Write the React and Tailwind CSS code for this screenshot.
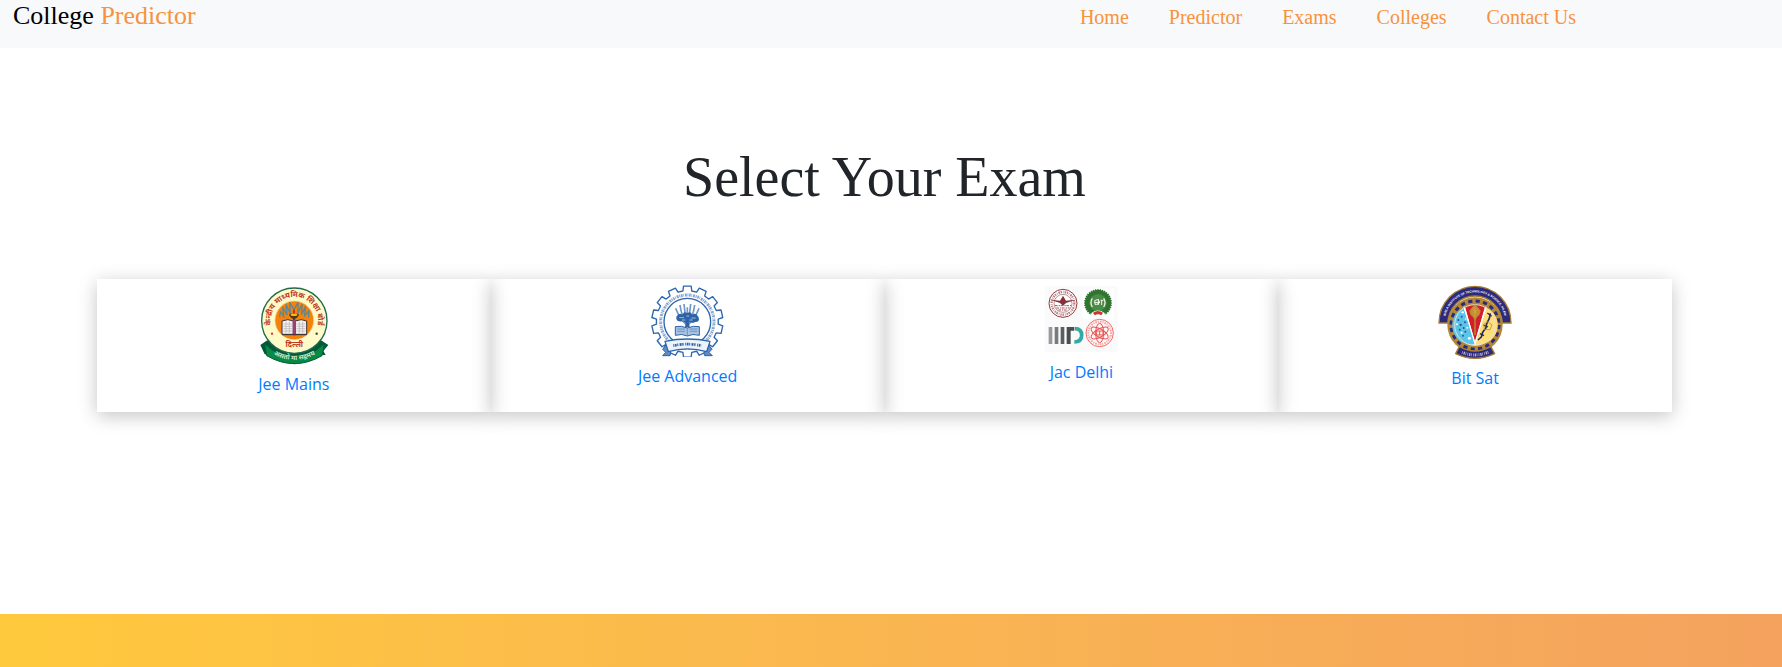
import React from "react";

const NAV_LINKS = ["Home", "Predictor", "Exams", "Colleges", "Contact Us"];

const polar = (cx, cy, r, deg) => {
  const a = ((deg - 90) * Math.PI) / 180;
  return [(cx + r * Math.cos(a)).toFixed(1), (cy + r * Math.sin(a)).toFixed(1)].join(" ");
};

const gearPath = (cx, cy, outer, base, teeth) => {
  const step = 360 / teeth;
  let d = "";
  for (let i = 0; i < teeth; i += 1) {
    const a = i * step;
    const points = [
      [base, a - step * 0.32],
      [outer, a - step * 0.24],
      [outer, a + step * 0.24],
      [base, a + step * 0.32],
    ];
    points.forEach(([r, deg], k) => {
      d += `${i === 0 && k === 0 ? "M" : "L"}${polar(cx, cy, r, deg)}`;
    });
  }
  return `${d}Z`;
};

function CbseLogo() {
  return (
    <svg viewBox="29 30 210 240" className="h-[80px] w-[70px]" role="img" aria-label="Jee Mains logo">
      <path d="M33 210L54 196L215 196L237 210L222 228L229 240L200 240L135 268L68 240L46 238Z" fill="#00593a" />
      <circle cx="135" cy="137" r="98" fill="#fffbc9" stroke="#1d6b4c" strokeWidth="4" />
      <path d="M46 206Q135 290 225 206L218 242Q135 290 52 242Z" fill="#068a47" stroke="#0a5a38" strokeWidth="3" />
      <circle cx="135" cy="136" r="58" fill="#f5820b" stroke="#ead9a0" strokeWidth="2" />
      <path
        d="M91 126L93 110L103 124L100 96L113 120L110 88L123 116L121 82L134 104L146 82L146 114L158 88L157 118L169 94L166 122L178 108L178 126"
        fill="none"
        stroke="#5e8793"
        strokeWidth="4"
      />
      <path d="M119 118Q134 110 149 118Q146 130 134 132Q122 130 119 118ZM131 130H137V137H131Z" fill="#4c3a20" />
      <ellipse cx="134" cy="119" rx="10" ry="4" fill="#e8c21a" />
      <path d="M134 102Q141 111 134 118Q127 111 134 102Z" fill="#e1261c" />
      <path d="M98 138Q116 130 132 138V178H98ZM138 138Q156 130 172 138V178H138Z" fill="#f3f0ee" stroke="#3d3136" strokeWidth="3" />
      <path d="M102 147H129M102 154H129M102 161H129M102 168H129M141 147H168M141 154H168M141 161H168M141 168H168M110 140V174M120 140V174M150 140V174M160 140V174" stroke="#a8a3a4" strokeWidth="1.5" />
      <path d="M130 134H140V181H130Z" fill="#9c3f78" />
      <path d="M98 179H172" stroke="#3d3136" strokeWidth="3" />
      <circle cx="68" cy="176" r="3.5" fill="#e5392c" />
      <circle cx="202" cy="176" r="3.5" fill="#2f3e2b" />
      <path id="cbse-ring" d="M66 154A71 71 0 1 1 204 154" fill="none" />
      <text fontSize="23" fontWeight="700" fill="#c0391f" className="font-['Noto_Sans',sans-serif]">
        <textPath href="#cbse-ring" startOffset="50%" textAnchor="middle">केन्द्रीय माध्यमिक शिक्षा बोर्ड</textPath>
      </text>
      <text x="135" y="217" fontSize="22" fontWeight="700" textAnchor="middle" fill="#c0391f" className="font-['Noto_Sans',sans-serif]">दिल्ली</text>
      <path id="cbse-ribbon" d="M52 226Q135 284 218 226" fill="none" />
      <text fontSize="20" fontWeight="700" fill="#c9e8c8" className="font-['Noto_Sans',sans-serif]">
        <textPath href="#cbse-ribbon" startOffset="50%" textAnchor="middle">असतो मा सद्गमय</textPath>
      </text>
    </svg>
  );
}

function IitLogo() {
  return (
    <svg viewBox="60 31 228 216" className="h-[72px] w-[76px]" role="img" aria-label="Jee Advanced logo">
      <path d={gearPath(172, 141, 107, 93, 14)} fill="#fff" stroke="#2c66ae" strokeWidth="4" strokeLinejoin="round" />
      <circle cx="172" cy="141" r="80" fill="none" stroke="#5f86bb" strokeWidth="9" strokeDasharray="3 2 5 2 2 3 6 2" opacity=".75" />
      <circle cx="172" cy="141" r="70" fill="#fff" stroke="#2c66ae" strokeWidth="4" />
      <path
        d="M172 156V98M172 152Q150 136 137 101M172 148Q155 128 150 91M172 148Q164 120 162 88M172 148Q180 120 182 88M172 148Q189 128 194 91M172 152Q194 136 207 101"
        fill="none"
        stroke="#6f96c8"
        strokeWidth="5"
      />
      <path d="M139 126Q148 112 157 120Q163 108 172 116Q181 108 187 120Q197 112 205 126Q212 141 196 142Q184 148 176 140Q168 148 160 140Q137 144 139 126Z" fill="#2c62a8" />
      <path d="M148 129H162M169 124H178M184 130H197M156 136H166M178 136H188" stroke="#b4cbe5" strokeWidth="2.5" />
      <path d="M168 138H176L179 158H165Z" fill="#2c62a8" />
      <path d="M136 156Q154 152 172 160Q190 152 208 156V182Q188 176 172 184Q156 176 136 182Z" fill="#a9c3e2" stroke="#2c62a8" strokeWidth="3" />
      <path d="M172 160V184M142 163H165M142 170H165M179 163H202M179 170H202" stroke="#4d7bb6" strokeWidth="2" />
      <path d="M98 224L115 200L122 236L120 243L98 243L107 233ZM246 224L229 200L222 236L224 243L247 243L237 233Z" fill="#5f8cc4" stroke="#2c62a8" strokeWidth="3" />
      <path d="M105 200Q172 186 240 200L230 231Q172 214 115 231Z" fill="#edf3fa" stroke="#2c66ae" strokeWidth="4" strokeLinejoin="round" />
      <path d="M130 213Q172 204 214 213" fill="none" stroke="#2c62a8" strokeWidth="8" strokeDasharray="3 2 5 2 3 4 6 2 4 5" />
    </svg>
  );
}

function JacLogo() {
  return (
    <svg viewBox="43 30 222 204" className="h-[68px] w-[74px]" role="img" aria-label="Jac Delhi logo">
      <path d="M45 34H264V231H45Z" fill="#fafafa" />
      <path d="M158 42H252V131H158Z" fill="#fff" />
      <circle cx="100" cy="85" r="42" fill="#fff" stroke="#8d3b41" strokeWidth="3" />
      <circle cx="100" cy="85" r="34" fill="none" stroke="#b98388" strokeWidth="7" strokeDasharray="4 3 2 3 5 2" />
      <circle cx="100" cy="85" r="27" fill="#fff" stroke="#a2555a" strokeWidth="2" />
      <path d="M62 74L91 77L100 62L109 77L138 74L109 84L100 92L91 84Z" fill="#84313a" />
      <path d="M76 92H124M80 99H120M86 105H114" stroke="#9c565b" strokeWidth="3" strokeDasharray="8 3 4 2" />
      <path d={gearPath(205, 84, 42, 39, 36)} fill="#2f7530" />
      <circle cx="205" cy="83" r="26" fill="#4d8a45" />
      <path d="M188 70Q180 83 188 96M222 70Q230 83 222 96" fill="none" stroke="#e6f0e2" strokeWidth="4" />
      <path d="M195 77Q204 70 210 79Q206 91 196 88ZM195 83H211M213 76H221M216 76V90M206 72V90" fill="none" stroke="#f3f8ef" strokeWidth="3" />
      <path d="M186 113Q205 100 224 113L230 128H180Z" fill="#fff" />
      <path d="M190 113Q205 103 220 113L215 121Q205 115 195 121Z" fill="#c43a2f" />
      <path d="M57 156H68V207H57Z" fill="#95989d" />
      <path d="M75 156H86V207H75Z" fill="#777a7f" />
      <path d="M93 156H104V207H93Z" fill="#5b5d62" />
      <path d="M111 156H134V167H123V207H111Z" fill="#4b4d53" />
      <path d="M136 161Q156 161 156 181Q156 201 134 201" fill="none" stroke="#32aaa6" strokeWidth="11" />
      <circle cx="210" cy="174" r="41" fill="#fff7f7" stroke="#ee6c6c" strokeWidth="3" />
      <circle cx="210" cy="174" r="34" fill="none" stroke="#f5a3a3" strokeWidth="6" strokeDasharray="3 3 5 3" />
      <g fill="none" stroke="#ea5050" strokeWidth="3">
        <ellipse cx="210" cy="174" rx="12" ry="29" />
        <ellipse cx="210" cy="174" rx="12" ry="29" transform="rotate(60 210 174)" />
        <ellipse cx="210" cy="174" rx="12" ry="29" transform="rotate(120 210 174)" />
        <path d="M200 168H220V180H200ZM210 168V180" />
      </g>
    </svg>
  );
}

function BitsLogo() {
  return (
    <svg viewBox="40 32 222 222" className="h-[74px] w-[74px]" role="img" aria-label="Bit Sat logo">
      <path d="M43 146A108 110 0 0 1 259 146L232 146A81 81 0 0 0 70 146Z" fill="#2c2a7c" stroke="#a67c35" strokeWidth="4" />
      <circle cx="151" cy="152" r="83" fill="#b38938" />
      <circle cx="151" cy="152" r="72" fill="none" stroke="#2c2a7c" strokeWidth="9" strokeDasharray="12.6 10" />
      <circle cx="151" cy="152" r="66" fill="#b38938" />
      <circle cx="151" cy="152" r="61" fill="#fff" />
      <path d="M151 210L117 100A58 58 0 0 0 151 210Z" fill="#5ac5e8" />
      <path d="M151 210L185 100A58 58 0 0 1 151 210Z" fill="#ffdf7a" />
      <path d="M151 205L121 97Q151 84 181 97Z" fill="#d0202b" />
      <path d="M118 97L151 207L184 97" fill="none" stroke="#fff" strokeWidth="4" />
      <circle cx="151" cy="152" r="61" fill="none" stroke="#e8e0d4" strokeWidth="3" />
      <path d="M151 90L159 98L168 110L164 122L157 128L153 136V182H149V136L145 128L138 122L134 110L143 98Z" fill="#c28d32" />
      <path d="M144 106L158 118M158 106L144 118M151 98V128" stroke="#e0a94a" strokeWidth="2" />
      <g fill="#34509c">
        <circle cx="111" cy="127" r="3" />
        <circle cx="101" cy="137" r="3" />
        <circle cx="121" cy="144" r="3" />
        <circle cx="108" cy="152" r="3.5" />
        <circle cx="117" cy="161" r="3" />
        <circle cx="105" cy="166" r="3" />
        <circle cx="122" cy="172" r="3" />
        <circle cx="115" cy="184" r="3" />
      </g>
      <g fill="#fff">
        <circle cx="114" cy="114" r="3.5" />
        <circle cx="97" cy="150" r="3" />
        <circle cx="128" cy="160" r="3" />
        <circle cx="111" cy="175" r="3" />
        <circle cx="134" cy="192" r="4.5" />
        <circle cx="123" cy="134" r="2.5" />
      </g>
      <path d="M197 117L194 132L186 148L184 160L174 174L170 188L160 197" fill="none" stroke="#28285e" strokeWidth="5" strokeLinejoin="round" />
      <path d="M188 116L201 126M176 152L190 158M166 178L178 184" stroke="#28285e" strokeWidth="4" />
      <path d="M176 150L190 142L202 152L196 166L180 166Z" fill="none" stroke="#b39339" strokeWidth="2.5" />
      <path d="M104 216Q151 244 198 216L210 238Q151 266 93 238Z" fill="#2c2a7c" stroke="#a67c35" strokeWidth="4" strokeLinejoin="round" />
      <path d="M112 234Q151 250 192 233" fill="none" stroke="#b9b3cf" strokeWidth="9" strokeDasharray="2 3 4 2 2 4" />
      <path id="bits-ring" d="M60 146A91 92 0 0 1 242 146" fill="none" />
      <text fontSize="9" fontWeight="700" fill="#ffffff" className="font-['Liberation_Sans',sans-serif]">
        <textPath href="#bits-ring" startOffset="50%" textAnchor="middle">BIRLA INSTITUTE OF TECHNOLOGY &amp; SCIENCE, PILANI</textPath>
      </text>
    </svg>
  );
}

const EXAMS = [
  { name: "Jee Mains", Logo: CbseLogo },
  { name: "Jee Advanced", Logo: IitLogo },
  { name: "Jac Delhi", Logo: JacLogo },
  { name: "Bit Sat", Logo: BitsLogo },
];

export default function App() {
  return (
    <div className="flex min-h-screen flex-col bg-white font-['Liberation_Serif',serif] text-[#212529]">
      <header className="flex h-12 items-start justify-between bg-[#f8f9fb] pl-[13px] pr-[206px]">
        <a href="#home" className="text-[26px] leading-8 text-black">
          College <span className="text-[#f7933c]">Predictor</span>
        </a>
        <nav className="flex gap-10 pt-[5px] text-xl leading-6 text-[#f7933c]">
          {NAV_LINKS.map((label) => (
            <a key={label} href="#home">{label}</a>
          ))}
        </nav>
      </header>

      <main className="pb-[202px] pl-[97px] pr-[110px] pt-24">
        <h1 className="text-center text-[56px] leading-[67px]">Select Your Exam</h1>
        <div className="mt-[68px] grid grid-cols-4">
          {EXAMS.map(({ name, Logo }) => (
            <a
              key={name}
              href="#exam"
              className="flex flex-col items-center pb-4 pt-1.5 font-['Open_Sans',sans-serif] text-base text-[#007bff] shadow-[0_4px_18px_0_rgba(0,0,0,0.23)]"
            >
              <Logo />
              <span className="mt-[7px] leading-6">{name}</span>
            </a>
          ))}
        </div>
      </main>

      <footer className="flex-1 bg-linear-to-r from-[#ffc93c] to-[#f4a25e]" />
    </div>
  );
}
